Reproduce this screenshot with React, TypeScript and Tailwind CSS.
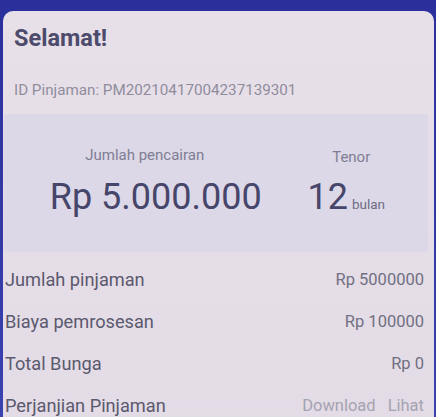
export default function App() {
  const rows = [
    { label: "Jumlah pinjaman", value: "Rp 5000000" },
    { label: "Biaya pemrosesan", value: "Rp 100000" },
    { label: "Total Bunga", value: "Rp 0" },
  ];

  return (
    <div
      className="w-[436px] h-[417px] overflow-hidden bg-gradient-to-b from-[#2a2f9c] to-[#3a42b0]"
      style={{ fontFamily: "Roboto, 'Noto Sans', sans-serif" }}
    >
      <div className="mt-[11px] ml-[3px] mr-[2px] h-[420px] rounded-t-[10px] bg-gradient-to-b from-[#e8e0e9] to-[#e3dbe5]">
        {/* Header */}
        <div className="pl-[11px] pt-[12px]">
          <h1 className="text-[23.5px] leading-[30px] font-bold text-[#4d4b6c]">Selamat!</h1>
          <p className="mt-[27px] text-[15.2px] leading-[20px] text-[#8f8d9d]">
            ID Pinjaman: PM20210417004237139301
          </p>
        </div>

        {/* Disbursement panel */}
        <div className="mt-[14px] ml-[1px] mr-[6px] h-[138px] rounded-[4px] bg-[#dcd8e8] flex pt-[31px]">
          <div className="w-[304px] flex flex-col items-center">
            <span className="mr-[22px] text-[15px] leading-[20px] text-[#7f7d92]">Jumlah pencairan</span>
            <span className="mt-[11px] text-[36px] leading-[42px] text-[#46456a]">Rp 5.000.000</span>
          </div>
          <div className="flex-1 flex flex-col items-center pr-[33px]">
            <span className="mt-[2px] text-[15px] leading-[20px] text-[#7f7d92]">Tenor</span>
            <div className="mt-[9px] mr-[10px] flex items-baseline">
              <span className="text-[36px] leading-[42px] text-[#46456a]">12</span>
              <span className="ml-[4px] text-[13.5px] text-[#6e6c84]">bulan</span>
            </div>
          </div>
        </div>

        {/* Detail rows */}
        <div className="mt-[7px] pl-[2px] pr-[10px]">
          {rows.map((r) => (
            <div key={r.label} className="h-[42px] flex items-center justify-between">
              <span className="text-[18.2px] text-[#5a596e]">{r.label}</span>
              <span className="text-[16.5px] text-[#707082]">{r.value}</span>
            </div>
          ))}
          <div className="h-[42px] flex items-center justify-between">
            <span className="text-[18.2px] text-[#5a596e]">Perjanjian Pinjaman</span>
            <div className="flex gap-[12px] text-[16.5px] text-[#a4a3b2]">
              <span>Download</span>
              <span>Lihat</span>
            </div>
          </div>
        </div>
      </div>
    </div>
  );
}
